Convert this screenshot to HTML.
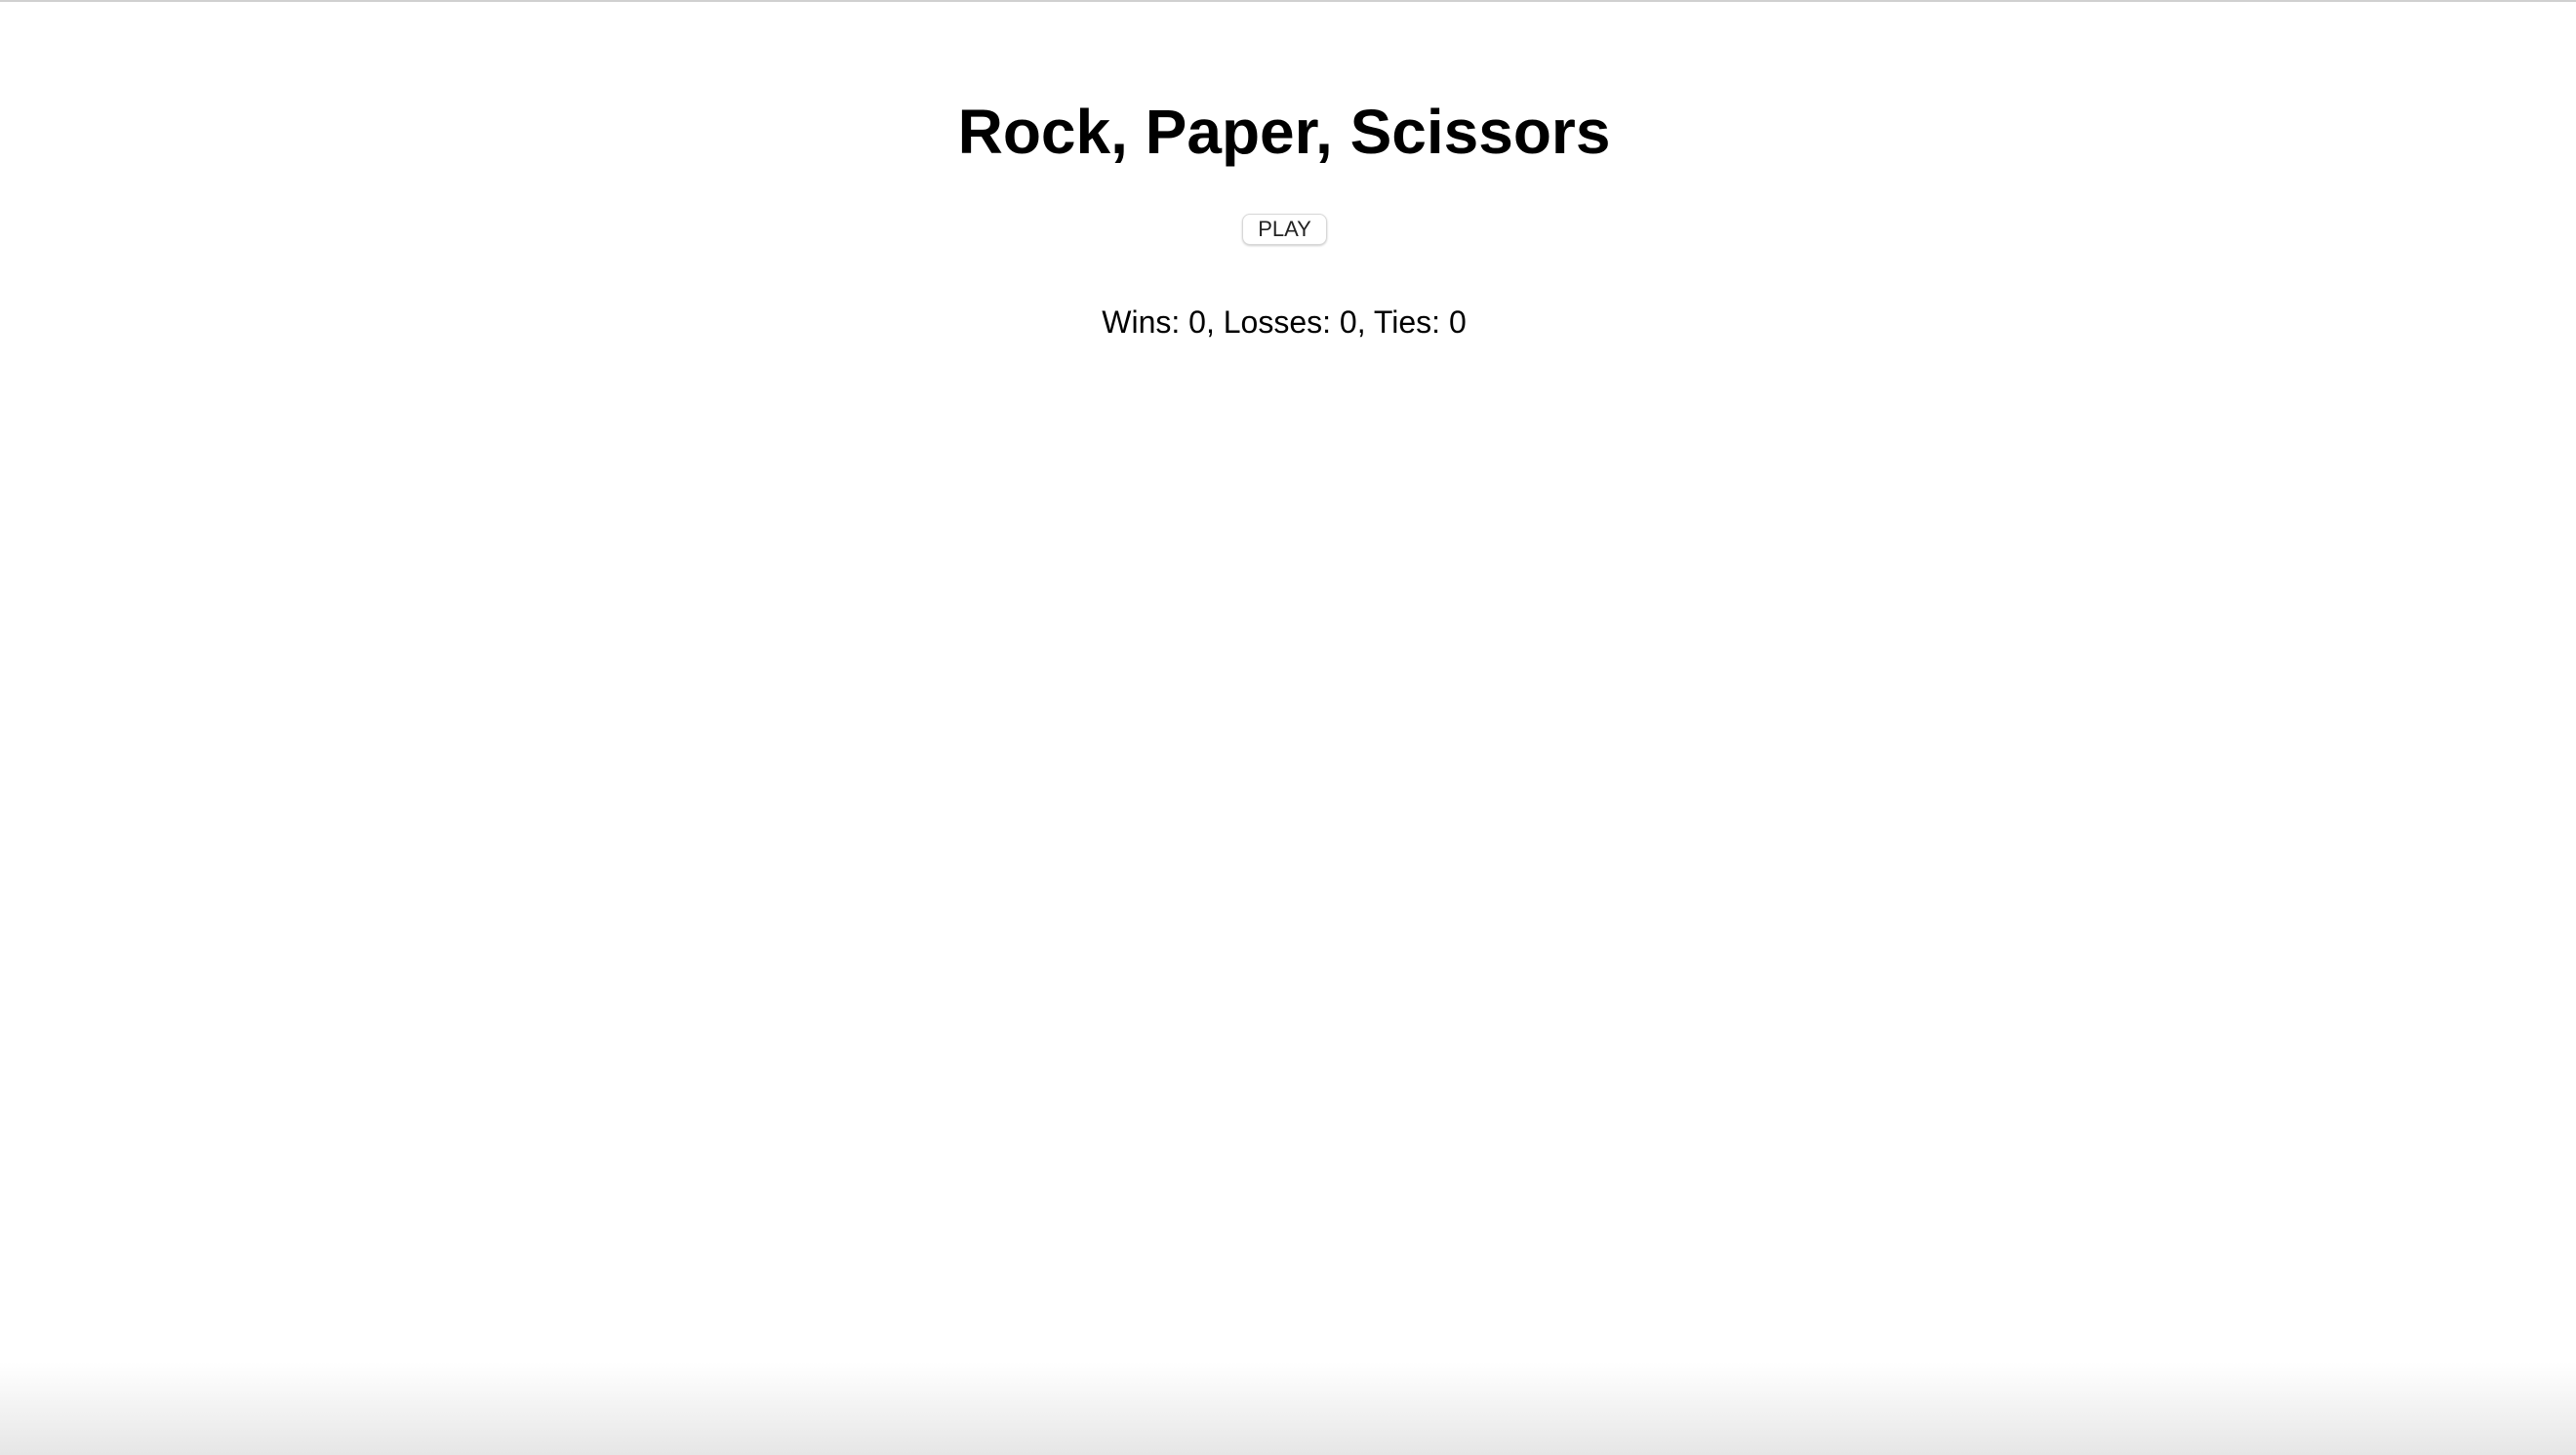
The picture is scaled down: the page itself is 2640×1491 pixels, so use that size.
<!DOCTYPE html>
<html><head><meta charset="utf-8"><style>
html,body{margin:0;padding:0;width:2640px;height:1491px;overflow:hidden;background:#fff;font-family:"Liberation Sans",Arial,sans-serif;position:relative}
.top{position:absolute;left:0;top:0;width:100%;height:2px;background:#d0d0d0}
.bot{position:absolute;left:0;bottom:0;width:100%;height:95px;background:linear-gradient(to bottom,rgba(232,232,232,0),#e6e6e6)}
h1{position:absolute;left:-4px;width:100%;top:98px;margin:0;text-align:center;font-size:64px;font-weight:bold;line-height:74px;color:#000}
.btn{position:absolute;left:1273px;top:219px;width:87px;height:32px;box-sizing:border-box;border:1px solid #d8d8d8;border-radius:8px;background:#fff;box-shadow:0 1px 2px rgba(0,0,0,.2);font-size:22px;color:#222;text-align:center;line-height:30px}
.st{position:absolute;left:-4px;width:100%;top:310px;text-align:center;font-size:32px;line-height:40px;color:#000}
</style></head><body>
<div class="top"></div>
<h1>Rock, Paper, Scissors</h1>
<div class="btn">PLAY</div>
<div class="st">Wins: 0, Losses: 0, Ties: 0</div>
<div class="bot"></div>
</body></html>
